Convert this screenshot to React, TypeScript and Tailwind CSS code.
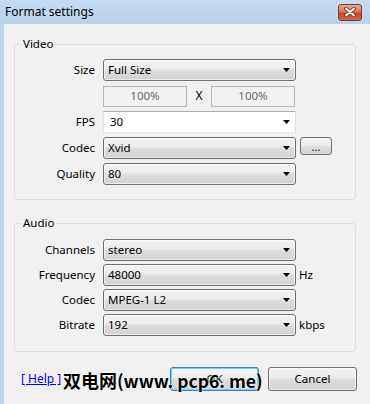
import type { ReactNode } from "react";

const comboBg =
    "bg-[linear-gradient(to_bottom,#f3f3f3_0%,#ececec_45%,#dedede_50%,#d2d2d2_100%)]";

function Arrow() {
    return (
        <svg width="7" height="4" viewBox="0 0 7 4">
            <path d="M0 0h7L3.5 4z" fill="#000" />
        </svg>
    );
}

function Combo({ value, editable }: { value: string; editable?: boolean }) {
    return (
        <div
            className={
                editable
                    ? "flex h-[22px] w-[193px] items-center justify-between border border-[#abadb3] border-t-[#abadb3] border-l-[#e2e3ea] border-r-[#dbdfe6] border-b-[#e3e9ef] bg-white pl-[6px] pr-[5px]"
                    : `flex h-[22px] w-[193px] items-center justify-between rounded-[3px] border border-[#707070] ${comboBg} pl-[4px] pr-[5px] shadow-[inset_0_0_0_1px_rgba(255,255,255,0.6)]`
            }
        >
            <span>{value}</span>
            <Arrow />
        </div>
    );
}

function Row({
    label,
    children,
}: {
    label: string;
    children: ReactNode;
}) {
    return (
        <div className="flex h-[22px] items-center">
            <span className="w-[80px] text-right">{label}</span>
            <div className="ml-[8px] flex items-center">{children}</div>
        </div>
    );
}

function Percent() {
    return (
        <div className="flex h-[21px] w-[84px] items-center justify-center border border-[#b5b5b5] bg-[#f0f0f0] text-[#6d6d6d]">
            100%
        </div>
    );
}

function Button({ children, focused }: { children: ReactNode; focused?: boolean }) {
    return (
        <div
            className={
                focused
                    ? `flex h-[24px] w-[89px] items-center justify-center rounded-[3px] border border-[#3c7fb1] ${comboBg} shadow-[inset_0_0_0_1px_#6ed3f5]`
                    : `flex h-[24px] w-[89px] items-center justify-center rounded-[3px] border border-[#707070] ${comboBg} shadow-[inset_0_0_0_1px_rgba(255,255,255,0.6)]`
            }
        >
            {children}
        </div>
    );
}

export default function App() {
    return (
        <div className="flex h-[404px] w-[370px] flex-col overflow-hidden font-['Noto_Sans',sans-serif] text-[11.5px] text-black">
            {/* title bar */}
            <div className="flex h-[24px] items-center justify-between bg-[linear-gradient(to_bottom,#c6dbf1,#b9d1ea)] pl-[5px] pr-[8px]">
                <span className="text-[12px]">Format settings</span>
                <div className="flex h-[17px] w-[24px] items-center justify-center rounded-[3px] border border-[#83392c] bg-[linear-gradient(to_bottom,#e6a796_0%,#d7735c_45%,#c6452c_55%,#d0664d_100%)]">
                    <svg width="12" height="10" viewBox="0 0 12 10">
                        <path d="M2 1.5l8 7M10 1.5l-8 7" stroke="#5b2a22" strokeWidth="3.6" strokeLinecap="round" />
                        <path d="M2 1.5l8 7M10 1.5l-8 7" stroke="#fff" strokeWidth="2" strokeLinecap="round" />
                    </svg>
                </div>
            </div>

            {/* body */}
            <div className="flex flex-1 border-l-4 border-[#bed4ed] bg-[#f0f0f0] pl-[10px] pr-[14px] pt-[12px]">
                <div className="flex flex-1 flex-col">
                    <fieldset className="rounded-[3px] border border-[#d5dfe5] px-0 pb-[14px] pt-[7px]">
                        <legend className="ml-[6px] px-[2px] leading-[16px]">Video</legend>
                        <div className="flex flex-col gap-[4px]">
                            <Row label="Size">
                                <Combo value="Full Size" />
                            </Row>
                            <div className="ml-[88px] flex h-[22px] items-center">
                                <Percent />
                                <span className="w-[24px] text-center text-[12px]">X</span>
                                <Percent />
                            </div>
                            <Row label="FPS">
                                <Combo value="30" editable />
                            </Row>
                            <Row label="Codec">
                                <Combo value="Xvid" />
                                <div className={`ml-[4px] flex h-[18px] w-[32px] items-center justify-center self-start rounded-[3px] border border-[#707070] ${comboBg} text-[11px] leading-none`}>
                                    ...
                                </div>
                            </Row>
                            <Row label="Quality">
                                <Combo value="80" />
                            </Row>
                        </div>
                    </fieldset>

                    <fieldset className="mt-[15px] rounded-[3px] border border-[#d5dfe5] px-0 pb-[15px] pt-[8px]">
                        <legend className="ml-[6px] px-[2px] leading-[16px]">Audio</legend>
                        <div className="flex flex-col gap-[3px]">
                            <Row label="Channels">
                                <Combo value="stereo" />
                            </Row>
                            <Row label="Frequency">
                                <Combo value="48000" />
                                <span className="ml-[3px]">Hz</span>
                            </Row>
                            <Row label="Codec">
                                <Combo value="MPEG-1 L2" />
                            </Row>
                            <Row label="Bitrate">
                                <Combo value="192" />
                                <span className="ml-[3px]">kbps</span>
                            </Row>
                        </div>
                    </fieldset>

                    <div className="relative mt-[15px] flex items-center justify-between">
                        <span className="ml-[7px] text-[12px] text-[#0000ff] underline">[ Help ]</span>
                        <div className="-mr-[1px] flex gap-[9px]">
                            <Button focused>OK</Button>
                            <Button>Cancel</Button>
                        </div>
                        <span className="absolute left-[49px] top-0 whitespace-nowrap font-['Noto_Sans_CJK_SC',sans-serif] text-[18px] font-bold leading-[26px] text-black [text-shadow:0_0_2px_#fff,0_0_2px_#fff]">
                            双电网
                            <span className="text-[17.5px]">(www. pcp6. me)</span>
                        </span>
                    </div>
                </div>
            </div>
        </div>
    );
}
